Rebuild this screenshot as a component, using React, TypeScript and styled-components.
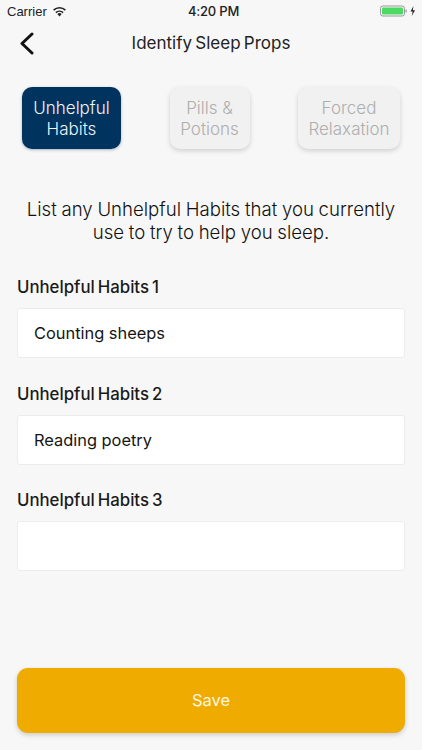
import React from "react";
import styled, { createGlobalStyle } from "styled-components";

const Global = createGlobalStyle`
  html, body { margin: 0; padding: 0; background: #f7f7f7; }
  * { box-sizing: border-box; }
`;

const Screen = styled.div`
  width: 422px;
  height: 750px;
  background: #f7f7f7;
  display: flex;
  flex-direction: column;
  font-family: Inter, "Noto Sans", sans-serif;
  color: #111;
  overflow: hidden;
`;

const StatusBar = styled.div`
  height: 22px;
  padding: 0 5px 0 7px;
  display: grid;
  grid-template-columns: 1fr auto 1fr;
  align-items: center;
  font-family: "Liberation Sans", Arial, sans-serif;
  font-size: 13px;
  color: #222;
`;

const StatusLeft = styled.div`
  display: flex;
  align-items: center;
  gap: 5px;
`;

const StatusTime = styled.div`
  font-family: Inter, sans-serif;
  font-weight: 500;
  font-size: 13px;
  letter-spacing: -0.2px;
  margin-left: 3px;
`;

const StatusRight = styled.div`
  display: flex;
  justify-content: flex-end;
  align-items: center;
`;

const NavBar = styled.div`
  height: 42px;
  position: relative;
  display: flex;
  align-items: center;
  justify-content: center;
`;

const BackIcon = styled.svg`
  position: absolute;
  left: 19px;
  top: 10px;
`;

const Title = styled.div`
  font-size: 17px;
  font-weight: 400;
  word-spacing: -1.5px;
  color: #222;
`;

const Tabs = styled.div`
  margin-top: 23px;
  padding: 0 22px;
  display: flex;
  justify-content: space-between;
`;

const Tab = styled.div<{ $active?: boolean; $w: number }>`
  width: ${(p) => p.$w}px;
  height: 62px;
  padding-top: 2px;
  border-radius: 10px;
  background: ${(p) => (p.$active ? "#01335f" : "#f1f1f1")};
  color: ${(p) => (p.$active ? "#f2f5f8" : "#aeaeae")};
  box-shadow: ${(p) =>
    p.$active ? "0 1px 3px rgba(1,51,95,0.35)" : "0 2px 5px rgba(0,0,0,0.16)"};
  display: flex;
  align-items: center;
  justify-content: center;
  text-align: center;
  font-size: 17px;
  font-weight: 300;
  line-height: 21px;
`;

const Intro = styled.p`
  margin: 49px 0 0;
  padding: 0 16px;
  text-align: center;
  font-size: 18.6px;
  font-weight: 300;
  word-spacing: -0.5px;
  line-height: 23px;
  color: #111;
`;

const Form = styled.div`
  margin-top: 32px;
  padding: 0 17px;
  display: flex;
  flex-direction: column;
`;

const Field = styled.div`
  height: 106.5px;
  display: flex;
  flex-direction: column;
`;

const Label = styled.div`
  height: 32px;
  font-size: 16.8px;
  font-weight: 500;
  word-spacing: -1.5px;
  line-height: 22px;
  color: #1a1a1a;
`;

const Input = styled.div`
  height: 50px;
  background: #fff;
  border: 1px solid #ececec;
  border-radius: 3px;
  padding: 0 16px;
  display: flex;
  align-items: center;
  font-size: 16.4px;
  color: #151515;
`;

const Spacer = styled.div`
  flex: 1;
`;

const SaveButton = styled.div`
  margin: 0 17px 17px;
  height: 65px;
  padding-bottom: 2px;
  background: #f0ab00;
  border-radius: 11px;
  box-shadow: 0 2px 5px rgba(0, 0, 0, 0.18);
  display: flex;
  align-items: center;
  justify-content: center;
  color: #fdf6e3;
  font-size: 16.5px;
`;

export default function App() {
  return (
    <Screen>
      <Global />
      <StatusBar>
        <StatusLeft>
          Carrier
          <svg width="15" height="11" viewBox="0 0 15 11" aria-hidden="true">
            <path d="M7.5 10.6 5.3 8.1a3.2 3.2 0 0 1 4.4 0Z" fill="#222" />
            <path d="M3.9 6.6a5.3 5.3 0 0 1 7.2 0" fill="none" stroke="#222" strokeWidth="1.6" />
            <path d="M1.6 4.1a8.6 8.6 0 0 1 11.8 0" fill="none" stroke="#222" strokeWidth="1.6" />
          </svg>
        </StatusLeft>
        <StatusTime>4:20 PM</StatusTime>
        <StatusRight>
          <svg width="37" height="12" viewBox="0 0 37 12" aria-hidden="true">
            <rect x="0.5" y="1" width="24" height="10" rx="2.4" fill="none" stroke="#999" />
            <rect x="2" y="2.5" width="21" height="7" rx="1.2" fill="#4cd964" />
            <rect x="25.5" y="4.5" width="1.2" height="3" fill="#999" />
            <path d="M33.5 1 30.5 6.6h2.2L31.8 11l3.2-5.8h-2.2Z" fill="#222" />
          </svg>
        </StatusRight>
      </StatusBar>
      <NavBar>
        <BackIcon width="16" height="24" viewBox="0 0 16 24" aria-hidden="true">
          <path d="M13 2 3 11.5 13 21" fill="none" stroke="#111" strokeWidth="3" strokeLinecap="round" strokeLinejoin="round" />
        </BackIcon>
        <Title>Identify Sleep Props</Title>
      </NavBar>
      <Tabs>
        <Tab $active $w={99}>Unhelpful<br />Habits</Tab>
        <Tab $w={80}>Pills &amp;<br />Potions</Tab>
        <Tab $w={102}>Forced<br />Relaxation</Tab>
      </Tabs>
      <Intro>List any Unhelpful Habits that you currently use to try to help you sleep.</Intro>
      <Form>
        <Field>
          <Label>Unhelpful Habits 1</Label>
          <Input>Counting sheeps</Input>
        </Field>
        <Field>
          <Label>Unhelpful Habits 2</Label>
          <Input>Reading poetry</Input>
        </Field>
        <Field>
          <Label>Unhelpful Habits 3</Label>
          <Input />
        </Field>
      </Form>
      <Spacer />
      <SaveButton>Save</SaveButton>
    </Screen>
  );
}
